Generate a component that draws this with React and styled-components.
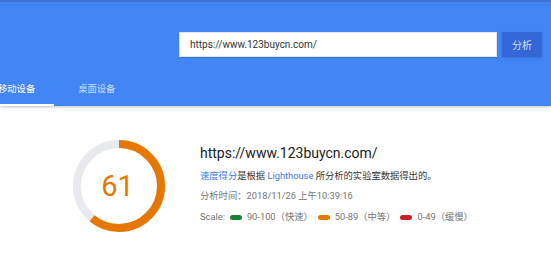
import React from "react";
import styled, { createGlobalStyle } from "styled-components";

const GlobalStyle = createGlobalStyle`
  html, body {
    margin: 0;
    padding: 0;
    background: #fff;
    overflow: hidden;
  }
  body {
    font-family: Roboto, "Noto Sans CJK SC", sans-serif;
  }
`;

const Header = styled.header`
  background: #4285f4;
  border-top: 2px solid #3a72d8;
  height: 104px;
  display: flex;
  flex-direction: column;
  box-shadow: 0 1px 3px rgba(0, 0, 0, 0.25);
  position: relative;
  z-index: 1;
`;

const SearchRow = styled.div`
  display: flex;
  justify-content: flex-end;
  gap: 5px;
  padding: 30px 9px 0 0;
`;

const UrlInput = styled.div`
  width: 318px;
  height: 25px;
  background: #fff;
  border: 1px solid #e0e6f2;
  box-sizing: border-box;
  display: flex;
  align-items: center;
  padding-left: 10px;
  font-size: 10px;
  color: #333;
  box-shadow: 0 1px 1px rgba(0, 0, 0, 0.15);
`;

const AnalyzeButton = styled.button`
  width: 40px;
  height: 25px;
  border: 0;
  padding: 0;
  background: #3367d6;
  color: rgba(255, 255, 255, 0.82);
  font-family: Roboto, "Noto Sans CJK SC", sans-serif;
  font-size: 10px;
  box-shadow: 0 1px 2px rgba(0, 0, 0, 0.15);
`;

const Tabs = styled.nav`
  margin-top: auto;
  display: flex;
  gap: 5px;
  margin-left: -21px;
`;

const Tab = styled.div`
  height: 36px;
  padding: 0 19px;
  display: flex;
  align-items: center;
  font-size: 9.3px;
  color: ${(p) => (p.$active ? "#fff" : "rgba(255, 255, 255, 0.72)")};
  box-shadow: ${(p) => (p.$active ? "inset 0 -2px 0 #fff" : "none")};
`;

const Result = styled.section`
  display: flex;
  align-items: flex-start;
  gap: 35px;
  padding: 34px 0 0 73px;
`;

const Gauge = styled.div`
  position: relative;
  width: 92px;
  height: 92px;
  svg {
    display: block;
  }
`;

const Score = styled.div`
  position: absolute;
  inset: 0;
  display: flex;
  align-items: center;
  justify-content: center;
  font-size: 29px;
  font-weight: 400;
  color: #e67700;
  padding-right: 3px;
`;

const Details = styled.div`
  display: flex;
  flex-direction: column;
  margin-top: 3px;
`;

const PageUrl = styled.div`
  font-size: 14px;
  line-height: 20px;
  color: #212121;
`;

const Line = styled.div`
  font-size: 9.3px;
  line-height: 20px;
  color: ${(p) => p.$color || "#757575"};
  margin-top: ${(p) => p.$gap || 0}px;
  display: flex;
  align-items: center;
  white-space: pre;
`;

const Link = styled.span`
  color: #3b78e7;
`;

const Legend = styled.span`
  display: inline-flex;
  align-items: center;
  gap: 5px;
  margin-left: 5px;
`;

const Pill = styled.i`
  display: inline-block;
  width: 12px;
  height: 5px;
  border-radius: 3px;
  background: ${(p) => p.$color};
`;

const ScoreGauge = ({ score }) => {
  const r = 42;
  const c = 2 * Math.PI * r;
  return (
    <Gauge>
      <svg width="92" height="92" viewBox="0 0 92 92">
        <circle cx="46" cy="46" r={r} fill="none" stroke="#e8eaed" strokeWidth="8" />
        <circle
          cx="46"
          cy="46"
          r={r}
          fill="none"
          stroke="#e67700"
          strokeWidth="8"
          strokeDasharray={`${(c * score) / 100} ${c}`}
          transform="rotate(-90 46 46)"
        />
      </svg>
      <Score>{score}</Score>
    </Gauge>
  );
};

const legend = [
  { color: "#178239", label: "90-100（快速）" },
  { color: "#e67700", label: "50-89（中等）" },
  { color: "#c7221f", label: "0-49（缓慢）" },
];

export default function App() {
  return (
    <>
      <GlobalStyle />
      <Header>
        <SearchRow>
          <UrlInput>https://www.123buycn.com/</UrlInput>
          <AnalyzeButton>分析</AnalyzeButton>
        </SearchRow>
        <Tabs>
          <Tab $active>移动设备</Tab>
          <Tab>桌面设备</Tab>
        </Tabs>
      </Header>
      <Result>
        <ScoreGauge score={61} />
        <Details>
          <PageUrl>https://www.123buycn.com/</PageUrl>
          <Line $color="#333" $gap={3}>
            <Link>速度得分</Link>是根据 <Link>Lighthouse</Link> 所分析的实验室数据得出的。
          </Line>
          <Line>分析时间：2018/11/26 上午10:39:16</Line>
          <Line $gap={1}>
            Scale:
            {legend.map((l) => (
              <Legend key={l.label}>
                <Pill $color={l.color} />
                {l.label}
              </Legend>
            ))}
          </Line>
        </Details>
      </Result>
    </>
  );
}
